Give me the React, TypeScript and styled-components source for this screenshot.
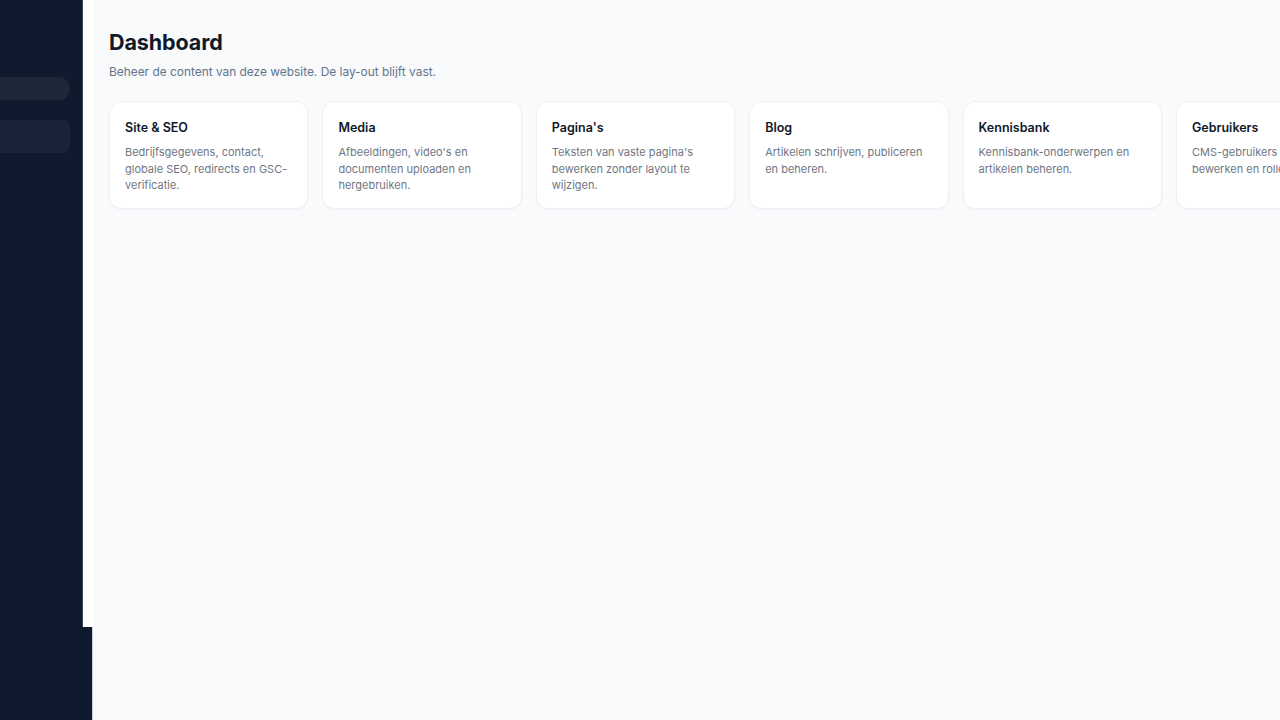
import React from "react";
import styled, { createGlobalStyle } from "styled-components";

const Global = createGlobalStyle`
  html, body { margin: 0; padding: 0; height: 100%; overflow: hidden; }
  body { font-family: Inter, "Noto Sans", "Liberation Sans", sans-serif; background: #f8fafc; }
  #root { height: 100%; }
`;

const Shell = styled.div`
  display: flex;
  height: 720px;
  width: 1280px;
  overflow: hidden;
`;

const LeftColumn = styled.div`
  display: flex;
  flex-direction: column;
  width: 93px;
  flex: none;
`;

const SidebarTop = styled.div`
  display: flex;
  height: 627px;
  flex: none;
`;

const SidebarNav = styled.nav`
  width: 82px;
  background: #101a2e;
  border-right: 1px solid #3a4356;
  display: flex;
  flex-direction: column;
  gap: 20px;
  padding-top: 77px;
  box-sizing: content-box;
`;

const Gutter = styled.div`
  flex: 1;
  background: #ffffff;
`;

const SidebarFoot = styled.div`
  flex: 1;
  background: #101a2e;
  border-right: 1px solid #c9ced6;
`;

const NavItem = styled.div<{ $tall?: boolean }>`
  width: 70px;
  height: ${(p) => (p.$tall ? "33px" : "23px")};
  background: ${(p) => (p.$tall ? "#1a2337" : "#1e273a")};
  border-radius: ${(p) => (p.$tall ? "0 8px 8px 0" : "0 12px 12px 0")};
`;

const Main = styled.main`
  flex: 1;
  min-width: 0;
  padding: 28px 16px 0 16px;
  background: #f8fafc;
  display: flex;
  flex-direction: column;
`;

const Title = styled.h1`
  margin: 0;
  font-size: 21.5px;
  line-height: 28px;
  font-weight: 700;
  color: #111827;
  letter-spacing: -0.1px;
`;

const Subtitle = styled.p`
  margin: 7px 0 0 0;
  font-size: 11.9px;
  line-height: 18px;
  color: #64748b;
`;

const CardRow = styled.div`
  display: flex;
  gap: 14px;
  margin-top: 20px;
`;

const Card = styled.a`
  flex: none;
  width: 199.4px;
  height: 108px;
  box-sizing: border-box;
  background: #ffffff;
  border: 1px solid #eef0f4;
  border-radius: 12px;
  padding: 17px 15px 0 15px;
  box-shadow: 0 1px 2px rgba(15, 23, 42, 0.03);
  text-decoration: none;
`;

const CardTitle = styled.div`
  font-size: 12.5px;
  line-height: 18px;
  font-weight: 600;
  color: #111827;
`;

const CardText = styled.div`
  margin-top: 7px;
  font-size: 11px;
  line-height: 16.5px;
  color: #6f7684;
`;

const cards = [
  { title: "Site & SEO", text: "Bedrijfsgegevens, contact, globale SEO, redirects en GSC-verificatie." },
  { title: "Media", text: "Afbeeldingen, video's en documenten uploaden en hergebruiken." },
  { title: "Pagina's", text: "Teksten van vaste pagina's bewerken zonder layout te wijzigen." },
  { title: "Blog", text: "Artikelen schrijven, publiceren en beheren." },
  { title: "Kennisbank", text: "Kennisbank-onderwerpen en artikelen beheren." },
  { title: "Gebruikers", text: "CMS-gebruikers toevoegen, bewerken en rollen beheren." },
];

export default function App() {
  return (
    <>
      <Global />
      <Shell>
        <LeftColumn>
          <SidebarTop>
            <SidebarNav>
              <NavItem />
              <NavItem $tall />
            </SidebarNav>
            <Gutter />
          </SidebarTop>
          <SidebarFoot />
        </LeftColumn>
        <Main>
          <Title>Dashboard</Title>
          <Subtitle>Beheer de content van deze website. De lay-out blijft vast.</Subtitle>
          <CardRow>
            {cards.map((c) => (
              <Card key={c.title} href="#">
                <CardTitle>{c.title}</CardTitle>
                <CardText>{c.text}</CardText>
              </Card>
            ))}
          </CardRow>
        </Main>
      </Shell>
    </>
  );
}
